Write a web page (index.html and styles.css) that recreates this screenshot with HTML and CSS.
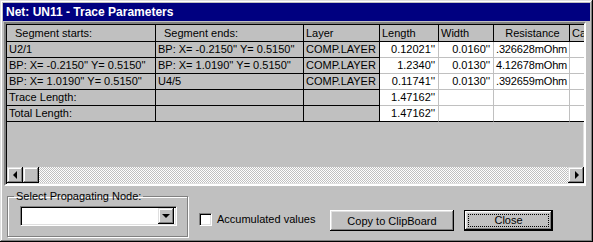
FILE: index.html
```html
<!DOCTYPE html>
<html lang="en">
<head>
  <meta charset="UTF-8">
  <title>Net: UN11 - Trace Parameters</title>
  <link rel="stylesheet" href="styles.css">
</head>
<body>

  <div class="window">
    <div class="titlebar">Net: UN11 - Trace Parameters</div>

    <div class="grid">
      <div class="grid-body">
        <div class="row head">
          <div class="cell c0 ind">Segment starts:</div>
          <div class="cell c1 ind">Segment ends:</div>
          <div class="cell c2">Layer</div>
          <div class="cell c3">Length</div>
          <div class="cell c4">Width</div>
          <div class="cell c5 mid">Resistance</div>
          <div class="cell c6">Ca</div>
        </div>
        <div class="row">
          <div class="cell c0">U2/1</div>
          <div class="cell c1">BP: X= -0.2150'' Y= 0.5150''</div>
          <div class="cell c2">COMP.LAYER</div>
          <div class="cell c3 num">0.12021''</div>
          <div class="cell c4 num">0.0160''</div>
          <div class="cell c5 val">.326628mOhm</div>
          <div class="cell c6 val"></div>
        </div>
        <div class="row">
          <div class="cell c0">BP: X= -0.2150'' Y= 0.5150''</div>
          <div class="cell c1">BP: X= 1.0190'' Y= 0.5150''</div>
          <div class="cell c2">COMP.LAYER</div>
          <div class="cell c3 num">1.2340''</div>
          <div class="cell c4 num">0.0130''</div>
          <div class="cell c5 val">4.12678mOhm</div>
          <div class="cell c6 val"></div>
        </div>
        <div class="row">
          <div class="cell c0">BP: X= 1.0190'' Y= 0.5150''</div>
          <div class="cell c1">U4/5</div>
          <div class="cell c2">COMP.LAYER</div>
          <div class="cell c3 num">0.11741''</div>
          <div class="cell c4 num">0.0130''</div>
          <div class="cell c5 val">.392659mOhm</div>
          <div class="cell c6 val"></div>
        </div>
        <div class="row">
          <div class="cell c0">Trace Length:</div>
          <div class="cell c1"></div>
          <div class="cell c2"></div>
          <div class="cell c3 num">1.47162''</div>
          <div class="cell c4 val"></div>
          <div class="cell c5 val"></div>
          <div class="cell c6 val"></div>
        </div>
        <div class="row last">
          <div class="cell c0">Total Length:</div>
          <div class="cell c1"></div>
          <div class="cell c2"></div>
          <div class="cell c3 num">1.47162''</div>
          <div class="cell c4 val"></div>
          <div class="cell c5 val"></div>
          <div class="cell c6 val"></div>
        </div>
      </div>

      <div class="hscroll">
        <div class="sbtn"><span class="arrow-left"></span></div>
        <div class="sbtn"></div>
        <div class="track"></div>
        <div class="sbtn"><span class="arrow-right"></span></div>
      </div>
    </div>

    <div class="footer">
      <fieldset class="group">
        <legend>Select Propagating Node:</legend>
        <div class="combo">
          <div class="combo-field"></div>
          <div class="combo-btn"><span class="arrow-down"></span></div>
        </div>
      </fieldset>

      <label class="check"><span class="box"></span>Accumulated values</label>

      <button class="btn copy">Copy to ClipBoard</button>
      <button class="btn close"><span class="focus">Close</span></button>
    </div>
  </div>

</body>
</html>
```

FILE: styles.css
```css
body {
  margin: 0;
  font-family: "Liberation Sans", Arial, sans-serif;
  font-size: 11px;
  color: #000;
  background-color: #c0c0c0;
}
.window {
  width: 593px;
  height: 242px;
  box-sizing: border-box;
  padding: 3px;
  background-color: #c0c0c0;
  box-shadow: inset -1px -1px #000, inset 1px 1px #dfdfdf, inset -2px -2px #808080, inset 2px 2px #fff;
}
.titlebar {
  height: 18px;
  line-height: 18px;
  padding-left: 3px;
  background-color: #000080;
  color: #fff;
  font-weight: bold;
  font-size: 12px;
}

/* grid */
.grid {
  margin: 1px 4px 0 1px;
  height: 164px;
  box-sizing: border-box;
  border: 2px solid;
  border-color: #808080 #fff #fff #808080;
  box-shadow: inset 1px 1px #000, inset -1px -1px #dfdfdf;
  padding: 1px 0 1px 1px;
  display: flex;
  flex-direction: column;
}
.grid-body {
  flex: 1;
  overflow: hidden;
}
.row {
  display: flex;
  height: 16px;
  white-space: nowrap;
}
.row.head {
  height: 17px;
}
.cell {
  flex: none;
  box-sizing: border-box;
  height: 100%;
  line-height: 15px;
  padding-left: 2px;
  overflow: hidden;
  background-color: #c0c0c0;
  border-right: 1px solid #000;
  border-bottom: 1px solid #000;
}
.head .cell {
  line-height: 16px;
}
.c0 { width: 149px; }
.c1 { width: 148px; }
.c2 { width: 76px; }
.c3 { width: 59px; }
.c4 { width: 55px; }
.c5 { width: 76px; }
.c6 { width: 60px; }
.ind { padding-left: 8px; }
.mid { text-align: center; }
.num, .val {
  background-color: #fff;
  border-color: #c0c0c0;
}
.num {
  text-align: right;
  padding-right: 3px;
}
.val {
  letter-spacing: -0.15px;
}
.row:not(.head) .c2 { border-right-color: #000; }
.row.last .cell { border-bottom-color: #000; }

/* scrollbar */
.hscroll {
  display: flex;
  height: 16px;
}
.sbtn {
  width: 16px;
  height: 16px;
  box-sizing: border-box;
  display: flex;
  align-items: center;
  justify-content: center;
  background-color: #c0c0c0;
  box-shadow: inset -1px -1px #000, inset 1px 1px #dfdfdf, inset -2px -2px #808080, inset 2px 2px #fff;
}
.track {
  flex: 1;
  background: repeating-conic-gradient(#fff 0 25%, #c0c0c0 0 50%) 0 0 / 2px 2px;
}
.arrow-left {
  border-top: 4px solid transparent;
  border-bottom: 4px solid transparent;
  border-right: 4px solid #000;
  margin-right: 1px;
}
.arrow-right {
  border-top: 4px solid transparent;
  border-bottom: 4px solid transparent;
  border-left: 4px solid #000;
  margin-left: 1px;
}
.arrow-down {
  border-left: 4px solid transparent;
  border-right: 4px solid transparent;
  border-top: 4px solid #000;
}

/* footer */
.footer {
  display: flex;
  align-items: flex-start;
}
.group {
  margin: 4px 0 0 4px;
  width: 181px;
  height: 47px;
  box-sizing: border-box;
  padding: 0 10px 0 12px;
  border: 1px solid #808080;
  box-shadow: 1px 1px 0 #fff, inset 1px 1px 0 #fff;
}
.group legend {
  padding: 0 2px;
  margin-left: -6px;
  line-height: 13px;
}
.combo {
  margin-top: 3px;
  width: 157px;
  height: 20px;
  box-sizing: border-box;
  border: 1px solid;
  border-color: #808080 #fff #fff #808080;
  box-shadow: inset 1px 1px #000, inset -1px -1px #dfdfdf;
  background-color: #fff;
  display: flex;
  padding: 2px;
}
.combo-field {
  flex: 1;
}
.combo-btn {
  width: 16px;
  height: 16px;
  margin-top: -1px;
  box-sizing: border-box;
  display: flex;
  align-items: center;
  justify-content: center;
  background-color: #c0c0c0;
  box-shadow: inset -1px -1px #000, inset 1px 1px #dfdfdf, inset -2px -2px #808080, inset 2px 2px #fff;
}
.check {
  margin: 27px 0 0 11px;
  width: 120px;
  display: flex;
  align-items: center;
  line-height: 13px;
  white-space: nowrap;
}
.check .box {
  width: 13px;
  height: 13px;
  box-sizing: border-box;
  margin-right: 5px;
  background-color: #fff;
  border: 1px solid;
  border-color: #808080 #fff #fff #808080;
  box-shadow: inset 1px 1px #000, inset -1px -1px #dfdfdf;
}
.btn {
  margin-top: 24px;
  height: 21px;
  box-sizing: border-box;
  padding: 0;
  border: none;
  font-family: inherit;
  font-size: 11px;
  color: #000;
  background-color: #c0c0c0;
  box-shadow: inset -1px -1px #000, inset 1px 1px #fff, inset -2px -2px #808080, inset 2px 2px #dfdfdf;
}
.copy {
  margin-left: 11px;
  width: 124px;
}
.close {
  margin-left: 10px;
  width: 89px;
  border: 1px solid #000;
  padding: 3px;
  display: flex;
}
.close .focus {
  flex: 1;
  line-height: 11px;
  border: 1px dotted #000;
  text-align: center;
}
```
